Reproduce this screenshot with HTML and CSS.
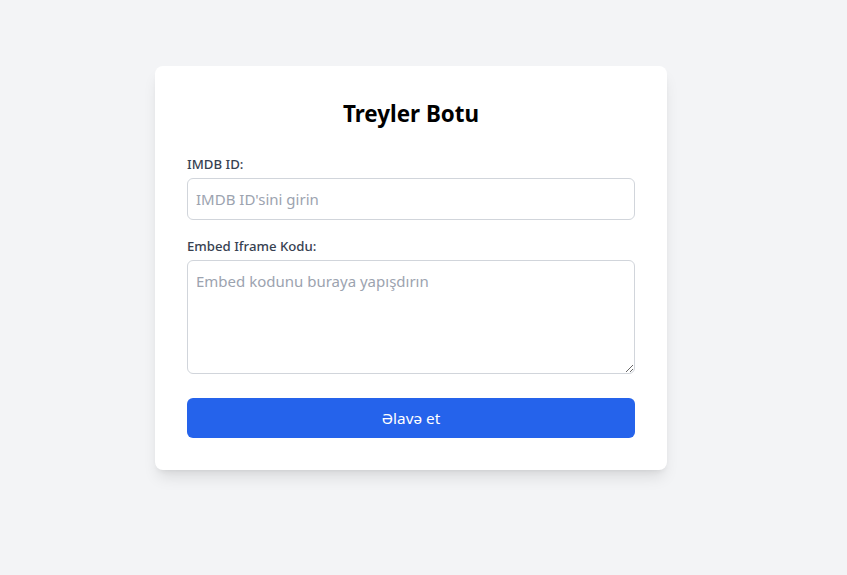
FILE: index.html
```html
<!DOCTYPE html>
<html lang="az">
<head>
<meta charset="utf-8">
<title>Treyler Botu</title>
<link rel="stylesheet" href="styles.css">
</head>
<body>
<main class="card">
  <h1 class="title">Treyler Botu</h1>
  <form class="form">
    <div class="field">
      <label class="label" for="imdb">IMDB ID:</label>
      <input class="input" id="imdb" type="text" placeholder="IMDB ID'sini girin">
    </div>
    <div class="field">
      <label class="label" for="embed">Embed Iframe Kodu:</label>
      <textarea class="input textarea" id="embed" rows="4" placeholder="Embed kodunu buraya yapışdırın"></textarea>
    </div>
    <button class="button" type="button">Əlavə et</button>
  </form>
</main>
</body>
</html>
```
FILE: styles.css
```css
html, body {
  margin: 0;
  padding: 0;
}
body {
  background: #f3f4f6;
  font-family: "Noto Sans", "Open Sans", sans-serif;
  min-height: 575px;
  box-sizing: border-box;
  padding: 66px 0 0 155px;
}
.card {
  width: 512px;
  box-sizing: border-box;
  background: #ffffff;
  border-radius: 8px;
  padding: 32px;
  box-shadow: 0 10px 15px -3px rgba(0,0,0,0.1), 0 4px 6px -4px rgba(0,0,0,0.1);
}
.title {
  margin: 0 0 24px;
  font-size: 22.4px;
  line-height: 32px;
  font-weight: 700;
  text-align: center;
  color: #000;
}
.form {
  display: flex;
  flex-direction: column;
}
.field {
  display: flex;
  flex-direction: column;
  gap: 4px;
  margin-bottom: 16px;
}
.label {
  font-size: 13.2px;
  line-height: 20px;
  font-weight: 500;
  color: #374151;
}
.input {
  display: block;
  width: 100%;
  box-sizing: border-box;
  border: 1px solid #d1d5db;
  border-radius: 6px;
  padding: 8px 8px;
  font-family: inherit;
  font-size: 15px;
  line-height: 24px;
  height: 42px;
  color: #111827;
  background: #fff;
  outline: none;
  margin: 0;
}
.input::placeholder {
  color: #9ca3af;
}
.textarea {
  height: 114px;
  resize: vertical;
}
.button {
  margin-top: 8px;
  height: 40px;
  border: none;
  border-radius: 6px;
  background: #2563eb;
  color: #fff;
  font-family: inherit;
  font-size: 15.3px;
  line-height: 24px;
  cursor: pointer;
}
```
